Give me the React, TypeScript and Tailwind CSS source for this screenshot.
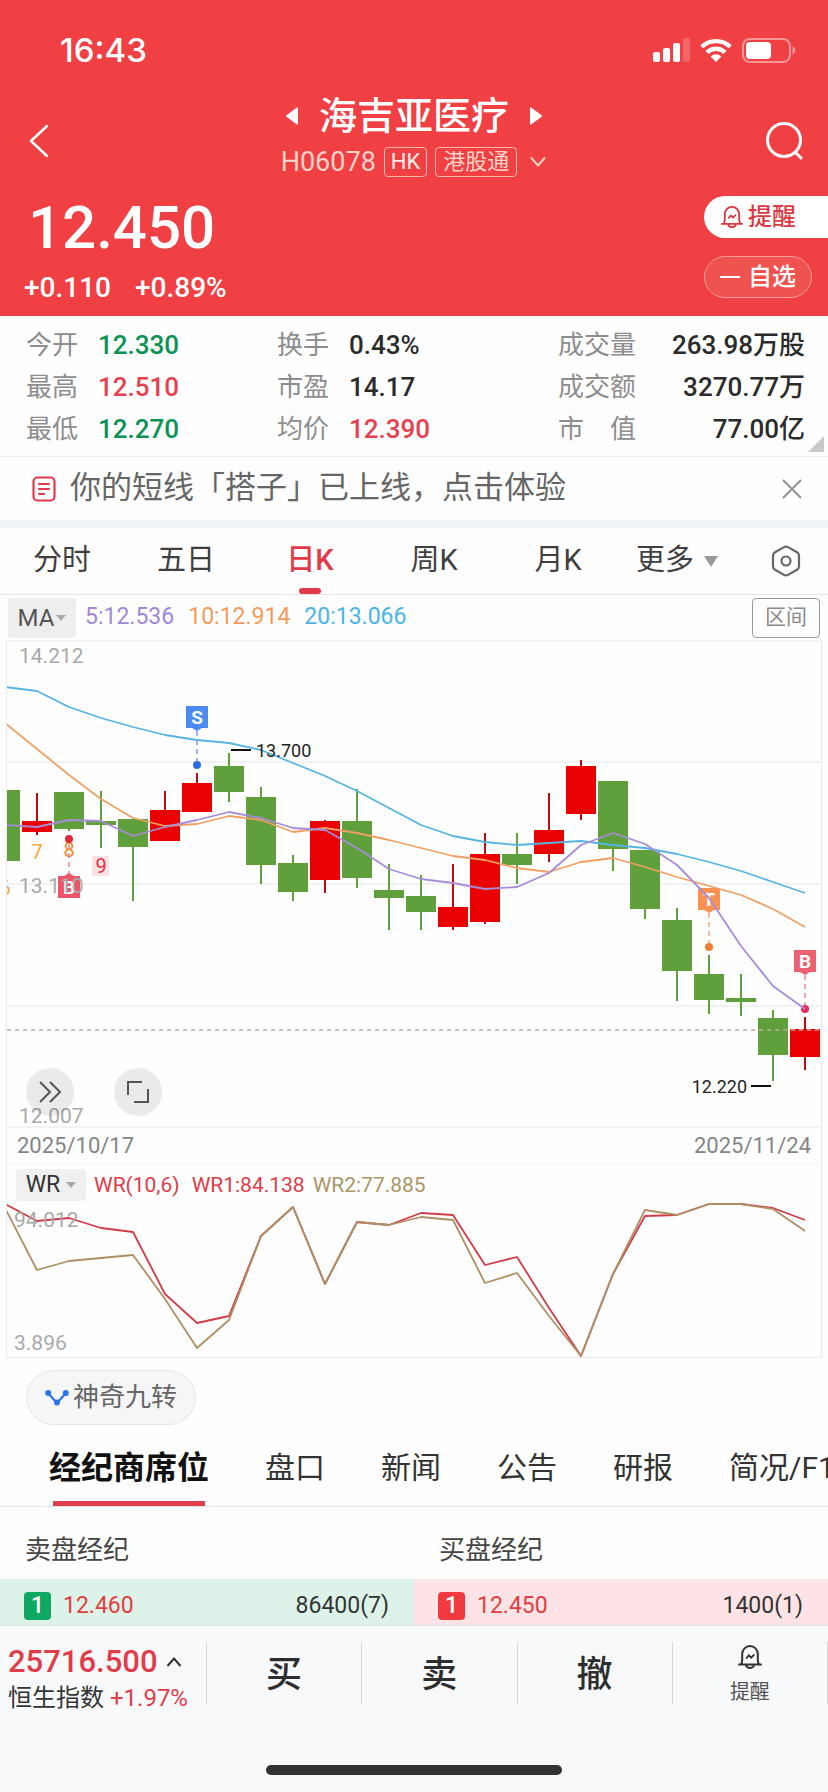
import type { ReactNode } from 'react';

type Candle = { high: number; top: number; bottom: number; low: number; up: boolean };

const STEP = 32;
const FIRST_X = 5;
const UP = '#ea0000';
const DOWN = '#5f9f3c';

const c = (high: number, top: number, bottom: number, low: number, up = false): Candle => ({ high, top, bottom, low, up });

const candles: Candle[] = [
  c(150, 150, 221, 221),
  c(153, 181, 192, 195, true),
  c(152, 152, 189, 191),
  c(151, 181, 185, 208),
  c(179, 179, 207, 261),
  c(151, 170, 201, 201, true),
  c(133, 143, 172, 172, true),
  c(113, 126, 152, 162),
  c(147, 157, 225, 244),
  c(215, 223, 252, 261),
  c(180, 181, 240, 253, true),
  c(149, 181, 238, 248),
  c(224, 250, 258, 290),
  c(235, 256, 272, 290),
  c(224, 267, 287, 290, true),
  c(193, 214, 282, 284, true),
  c(193, 214, 225, 244),
  c(153, 190, 214, 222, true),
  c(120, 126, 174, 180, true),
  c(141, 141, 209, 231),
  c(210, 210, 269, 279),
  c(268, 280, 331, 361),
  c(315, 334, 360, 374),
  c(334, 358, 362, 376),
  c(370, 378, 415, 441),
  c(377, 389, 417, 430, true),
];

const ma5 = [185, 187, 180, 181, 196, 187, 180, 172, 178, 188, 190, 208, 229, 239, 243, 249, 247, 233, 205, 193, 204, 225, 258, 306, 346, 369];
const ma10 = [83, 109, 135, 159, 178, 186, 184, 176, 180, 192, 188, 193, 200, 208, 216, 220, 228, 232, 222, 218, 227, 237, 246, 255, 269, 287];
const ma20 = [47, 51, 67, 78, 87, 95, 100, 103, 110, 123, 136, 151, 168, 185, 196, 202, 205, 203, 201, 205, 208, 214, 222, 231, 242, 253];
const wr1 = [3, 20, 17, 27, 31, 93, 122, 115, 35, 6, 83, 21, 24, 12, 14, 64, 56, 107, 155, 73, 15, 14, 3, 3, 7, 19];
const wr2 = [7, 69, 60, 57, 54, 98, 147, 119, 35, 6, 83, 21, 24, 16, 19, 82, 72, 115, 155, 73, 9, 14, 3, 3, 8, 30];

const xAt = (i: number) => FIRST_X + i * STEP;
const toPoints = (values: number[]) => values.map((y, i) => `${xAt(i)},${y}`).join(' ');

const stats = [
  [
    { label: '今开', value: '12.330', tone: 'text-[#0b9356]' },
    { label: '最高', value: '12.510', tone: 'text-[#e8404f]' },
    { label: '最低', value: '12.270', tone: 'text-[#0b9356]' },
  ],
  [
    { label: '换手', value: '0.43%', tone: 'text-[#2b2b2b]' },
    { label: '市盈', value: '14.17', tone: 'text-[#2b2b2b]' },
    { label: '均价', value: '12.390', tone: 'text-[#e8404f]' },
  ],
  [
    { label: '成交量', value: '263.98万股', tone: 'text-[#2b2b2b]' },
    { label: '成交额', value: '3270.77万', tone: 'text-[#2b2b2b]' },
    { label: '市　值', value: '77.00亿', tone: 'text-[#2b2b2b]' },
  ],
];

const periods = ['分时', '五日', '日K', '周K', '月K'];
const infoTabs = ['盘口', '新闻', '公告', '研报', '简况/F10'];

const BellIcon = ({ className }: { className: string }) => (
  <svg viewBox="0 0 26 26" className={className} fill="none" stroke="currentColor" strokeWidth="2" strokeLinecap="round" strokeLinejoin="round">
    <path d="M2 20.5h22M4 20c1.2-1.2 1.2-2.5 1.2-4.500V10a7.800 8 0 0 1 15.600 0v5.500c0 2 0 3.300 1.200 4.500M9 21.500c1.200 3.300 6.800 3.300 8 0" />
    <path d="M9.500 14l2.500-2.800 2 2.600 2.800-2.800" strokeWidth="1.8" />
  </svg>
);

const Header = () => (
  <header className="bg-[#f04043] pb-2 text-white">
    <div className="flex items-center justify-between pl-[60px] pr-8 pt-[30px]">
      <span className="font-[Inter] text-[33px] font-medium leading-10">16:43</span>
      <div className="flex items-center gap-2.5">
        <svg viewBox="0 0 37 24" className="h-6 w-[37px]" fill="#fff">
          <rect x="0" y="14" width="7" height="10" rx="2" />
          <rect x="10" y="10" width="7" height="14" rx="2" />
          <rect x="20" y="5" width="7" height="19" rx="2" />
          <rect x="30" y="0" width="7" height="24" rx="2" opacity="0.2" />
        </svg>
        <svg viewBox="0 0 32 24" className="h-6 w-8" fill="none" stroke="#fff" strokeWidth="4.4">
          <path d="M1.8 8.8a20.5 20.5 0 0 1 28.4 0" />
          <path d="M7 14.4a13 13 0 0 1 18 0" />
          <path d="M16 24l-5.4-5.6a8 8 0 0 1 10.8 0z" fill="#fff" stroke="none" />
        </svg>
        <svg viewBox="0 0 54 25" className="h-[25px] w-[54px]">
          <rect x="1" y="1" width="47" height="23" rx="7" fill="none" stroke="#fff" strokeOpacity="0.45" strokeWidth="2" />
          <rect x="4" y="4" width="25" height="17" rx="4" fill="#fff" />
          <path d="M50.5 8.5c3.500 1.500 3.500 6.500 0 8z" fill="#fff" fillOpacity="0.45" />
        </svg>
      </div>
    </div>

    <div className="flex items-center justify-between pl-7 pr-[22px] pt-6">
      <button type="button" aria-label="返回" className="w-9 pt-2.5">
        <svg viewBox="0 0 22 34" className="h-[34px] w-[22px]" fill="none" stroke="#fff" strokeWidth="2.5" strokeLinecap="round" strokeLinejoin="round">
          <path d="M19 2L3 17l16 15" />
        </svg>
      </button>
      <div className="flex flex-col items-center gap-2">
        <div className="flex items-center gap-5">
          <button type="button" aria-label="上一只">
            <svg viewBox="0 0 13 18" className="h-[18px] w-[13px]" fill="#fff">
              <path d="M12 1.5v15a1 1 0 0 1-1.5.8L.8 10a1.2 1.2 0 0 1 0-2L10.5.7A1 1 0 0 1 12 1.5z" />
            </svg>
          </button>
          <h1 className="text-[38px] font-medium leading-11">海吉亚医疗</h1>
          <button type="button" aria-label="下一只">
            <svg viewBox="0 0 13 18" className="h-[18px] w-[13px]" fill="#fff">
              <path d="M1 1.5v15a1 1 0 0 0 1.5.8l9.7-7.3a1.2 1.2 0 0 0 0-2L2.5.7A1 1 0 0 0 1 1.5z" />
            </svg>
          </button>
        </div>
        <div className="flex items-center gap-2">
          <span className="text-[27px] leading-8 text-[#fdd2c8]">H06078</span>
          <span className="rounded border border-[#fbb7b0] px-1.5 text-[22px] leading-7 text-[#fff0ec]">HK</span>
          <span className="rounded border border-[#fbb7b0] px-[7px] text-[22px] leading-7 text-[#fdd2c8]">港股通</span>
          <button type="button" aria-label="展开" className="pl-1">
            <svg viewBox="0 0 18 12" className="h-3 w-[18px]" fill="none" stroke="#fdd2c8" strokeWidth="2"><path d="M2 1.5l7 8 7-8" /></svg>
          </button>
        </div>
      </div>
      <button type="button" aria-label="搜索" className="pt-2.5">
        <svg viewBox="0 0 42 42" className="size-[42px]" fill="none" stroke="#fff" strokeWidth="3" strokeLinecap="round">
          <circle cx="20" cy="20" r="16.5" />
          <path d="M31 32l6 6" />
        </svg>
      </button>
    </div>

    <div className="flex justify-between pt-[18px]">
      <div className="pl-6">
        <div className="pl-1 text-[60px] font-medium leading-16">12.450</div>
        <div className="flex gap-6 pt-2 text-[28px] font-medium leading-10">
          <span>+0.110</span>
          <span>+0.89%</span>
        </div>
      </div>
      <div className="flex w-[124px] flex-col gap-[18px]">
        <button type="button" className="flex h-[42px] items-center gap-1 rounded-l-full bg-white pl-4 text-2xl font-medium text-[#dc3a42]">
          <BellIcon className="size-6" />
          提醒
        </button>
        <button type="button" className="mr-4 flex h-[42px] items-center justify-center gap-2 rounded-full border border-[#f69c9c] bg-[#ef5350] text-2xl font-medium text-white">
          <span className="h-0.5 w-5 bg-white" />
          自选
        </button>
      </div>
    </div>
  </header>
);

const Stats = () => (
  <section className="relative grid grid-cols-[251fr_281fr_247fr] border-b border-[#e8eaec] pb-1.5 pl-[26px] pr-[23px] pt-2">
    {stats.map((column, i) => (
      <dl key={i}>
        {column.map((row) => (
          <div key={row.label} className={i === 2 ? 'flex h-[42px] items-center justify-between' : 'flex h-[42px] items-center gap-5'}>
            <dt className="whitespace-nowrap text-[26px] text-[#8d8d8d]">{row.label}</dt>
            <dd className={`whitespace-nowrap text-[26px] font-medium ${row.tone}`}>{row.value}</dd>
          </div>
        ))}
      </dl>
    ))}
    <svg viewBox="0 0 16 16" className="absolute bottom-1 right-1 size-4" fill="#c9c9c9"><path d="M16 0v16H0z" /></svg>
  </section>
);

const Notice = () => (
  <section className="flex h-[63px] items-center pl-8 pr-[26px]">
    <svg viewBox="0 0 24 26" className="h-[26px] w-6" fill="none" stroke="#e23a4a" strokeWidth="2.2" strokeLinecap="round">
      <rect x="1.5" y="1.5" width="21" height="23" rx="4" />
      <path d="M7 8h10M7 13h10M7 18h5" />
    </svg>
    <a href="#notice" className="flex-1 whitespace-nowrap pl-3.5 text-[31px] text-[#666]">你的短线「搭子」已上线，点击体验</a>
    <button type="button" aria-label="关闭">
      <svg viewBox="0 0 20 20" className="size-5" stroke="#8f8f8f" strokeWidth="1.8"><path d="M1 1l18 18M19 1L1 19" /></svg>
    </button>
  </section>
);

const PeriodTabs = () => (
  <nav className="flex h-[67px] items-center border-b border-[#e2e4e6]">
    {periods.map((period) => (
      <button
        key={period}
        type="button"
        className={period === '日K' ? 'relative h-full flex-1 text-[29px] font-medium text-[#e23a4a]' : 'h-full flex-1 text-[29px] text-[#3f3f3f]'}
      >
        {period}
        {period === '日K' && <span className="absolute bottom-0 left-1/2 h-1.5 w-[22px] -translate-x-1/2 rounded-sm bg-[#e23a4a]" />}
      </button>
    ))}
    <button type="button" className="flex h-full w-[151px] items-center gap-2.5 pl-4 text-[29px] text-[#3f3f3f]">
      更多
      <svg viewBox="0 0 14 11" className="h-[11px] w-3.5" fill="#9a9a9a"><path d="M0 0h14L7 11z" /></svg>
    </button>
    <button type="button" aria-label="设置" className="w-[57px]">
      <svg viewBox="0 0 30 32" className="h-8 w-[30px]" fill="none" stroke="#666" strokeWidth="2.2" strokeLinejoin="round">
        <path d="M13 2.1a4 4 0 0 1 4 0l9 5.200a4 4 0 0 1 2 3.400v10.600a4 4 0 0 1-2 3.400l-9 5.200a4 4 0 0 1-4 0l-9-5.200a4 4 0 0 1-2-3.400V10.700a4 4 0 0 1 2-3.400z" />
        <circle cx="15" cy="16" r="4.5" />
      </svg>
    </button>
  </nav>
);

const Caret = () => (
  <svg viewBox="0 0 10 6" className="h-1.5 w-2.5" fill="#a8a8a8"><path d="M0 0h10L5 6z" /></svg>
);

const Flag = ({ x, y, color, letter, up = false }: { x: number; y: number; color: string; letter: string; up?: boolean }) => (
  <g>
    <rect x={x - 11} y={y} width="22" height="22" fill={color} />
    <path d={up ? `M${x - 5} ${y}l5-3 5 3z` : `M${x - 5} ${y + 22}l5 3 5-3z`} fill={color} />
    <text x={x} y={y + 18} fontSize="19" fontWeight="700" fill="#fff" textAnchor="middle">{letter}</text>
  </g>
);

const Line = ({ values, color }: { values: number[]; color: string }) => (
  <polyline points={toPoints(values)} fill="none" stroke={color} strokeWidth="1.8" strokeLinejoin="round" />
);

const CandleChart = () => (
  <div className="relative">
    <svg viewBox="7 0 814 488" className="block w-full" role="img" aria-label="日K线">
      {[1, 122, 244, 366, 487].map((y) => (
        <path key={y} d={`M7 ${y}h814`} stroke="#f0f2f3" strokeWidth="2" />
      ))}
      {candles.map((k, i) => (
        <g key={i} fill={k.up ? UP : DOWN}>
          <rect x={xAt(i) - 1} y={k.high} width="2" height={k.low - k.high} fill={k.up ? '#b90d12' : DOWN} />
          <rect x={xAt(i) - 15} y={k.top} width="30" height={k.bottom - k.top} />
        </g>
      ))}
      <g fontSize="20" textAnchor="middle">
        <text x="5" y="255" fill="#f2a93b">6</text>
        <text x="37" y="219" fill="#f2a93b">7</text>
        <text x="69" y="217" fill="#f08a2c">8</text>
        <rect x="92" y="216" width="17" height="20" fill="#fde0e1" />
        <text x="101" y="233" fill="#e0344a">9</text>
      </g>
      <g strokeWidth="1.5" strokeDasharray="5 4">
        <path d="M197 91v30" stroke="#7f9fe8" />
        <path d="M69 204v30" stroke="#d98a94" />
        <path d="M709 273v30" stroke="#f2a97e" />
        <path d="M805 335v30" stroke="#ea8d98" />
      </g>
      <Flag x={197} y={66} color="#4b8bf0" letter="S" />
      <Flag x={69} y={236} color="#f0546a" letter="B" up />
      <Flag x={709} y={248} color="#fb9252" letter="T" />
      <Flag x={805} y={310} color="#ec6172" letter="B" />
      <circle cx="197" cy="125" r="4" fill="#2a6be0" />
      <circle cx="69" cy="199" r="4" fill="#e0283c" />
      <circle cx="709" cy="307" r="4" fill="#f08030" />
      <circle cx="805" cy="369" r="4" fill="#e82c5c" />
      <g fontSize="21" fill="#a9a9a9">
        <text x="19" y="23">14.212</text>
        <text x="19" y="253">13.110</text>
        <text x="19" y="483">12.007</text>
      </g>
      <Line values={ma20} color="#55b4e0" />
      <Line values={ma10} color="#f0a062" />
      <Line values={ma5} color="#a78cd8" />
      <path d="M7 390h814" stroke="#c3a999" strokeWidth="1.5" strokeDasharray="4 4" />
      <path d="M231 110h20M751 446h20" stroke="#111" strokeWidth="2" />
      <g fontSize="18" fill="#222">
        <text x="256" y="117">13.700</text>
        <text x="747" y="453" textAnchor="end">12.220</text>
      </g>
    </svg>
    <div className="absolute bottom-3 left-[19px] flex gap-10">
      <button type="button" aria-label="快进" className="flex size-12 items-center justify-center rounded-full bg-black/8">
        <svg viewBox="0 0 24 22" className="h-[22px] w-6" fill="none" stroke="#555" strokeWidth="2"><path d="M2 1l10 10L2 21M12 1l10 10-10 10" /></svg>
      </button>
      <button type="button" aria-label="全屏" className="flex size-12 items-center justify-center rounded-full bg-black/8">
        <svg viewBox="0 0 24 24" className="size-6" fill="none" stroke="#555" strokeWidth="2"><path d="M2 15V2h14M22 9v13H8" /></svg>
      </button>
    </div>
  </div>
);

const Indicators = () => (
  <section>
    <div className="flex h-[45px] items-center px-2 text-[23px]">
      <button type="button" className="flex h-10 w-[68px] items-center justify-center gap-0.5 rounded bg-[#eeeeee] text-2xl text-[#555]">
        MA
        <Caret />
      </button>
      <div className="flex flex-1 gap-3.5 pl-[9px]">
        <span className="text-[#a088d8]">5:12.536</span>
        <span className="text-[#f59a5c]">10:12.914</span>
        <span className="text-[#4bb4e6]">20:13.066</span>
      </div>
      <button type="button" className="h-10 w-[68px] rounded border border-[#9a9a9a] text-[21px] text-[#8a8a8a]">区间</button>
    </div>
    <div className="mx-1.5 border-x border-b border-[#e6eaea]">
      <CandleChart />
      <div className="flex h-9 items-center justify-between border-b border-[#f1f3f3] px-2.5 text-[22px] text-[#858585]">
        <time dateTime="2025-10-17">2025/10/17</time>
        <time dateTime="2025-11-24">2025/11/24</time>
      </div>
      <div className="flex h-[37px] items-end pl-[9px] text-[21px]">
        <button type="button" className="flex h-8 w-[70px] items-center justify-center gap-1.5 rounded bg-[#f0f0f0] text-[23px] text-[#333]">
          WR
          <Caret />
        </button>
        <span className="pl-2 leading-8 text-[#dd3c48]">WR(10,6)</span>
        <span className="pl-3 leading-8 text-[#dd3c48]">WR1:84.138</span>
        <span className="pl-2 leading-8 text-[#ad9567]">WR2:77.885</span>
      </div>
      <svg viewBox="7 0 814 156" className="block w-full" role="img" aria-label="WR指标">
        <Line values={wr1} color="#d23b48" />
        <Line values={wr2} color="#ad8f63" />
        <g fontSize="21" fill="#a9a9a9">
          <text x="14" y="26">94.012</text>
          <text x="14" y="149">3.896</text>
        </g>
      </svg>
    </div>
    <button type="button" className="ml-[26px] mt-3 flex h-[55px] w-[170px] items-center justify-center gap-1 rounded-full border border-[#e6e6e8] bg-[#f6f6f7] text-[26px] text-[#666]">
      <svg viewBox="0 0 24 18" className="h-[18px] w-6" fill="#2b74ea">
        <path d="M3 4l9 10 9-10" fill="none" stroke="#2b74ea" strokeWidth="2.2" />
        <circle cx="3.2" cy="4" r="3" />
        <circle cx="12" cy="13.5" r="3" />
        <circle cx="20.8" cy="4" r="3" />
      </svg>
      神奇九转
    </button>
  </section>
);

const InfoTabs = () => (
  <nav className="mt-1 flex h-[78px] gap-14 overflow-hidden whitespace-nowrap border-b border-[#e4e4e6] pl-[49px] text-[30px] text-[#333]">
    <button type="button" className="relative h-full shrink-0 text-[32px] font-bold text-[#111]">
      经纪商席位
      <span className="absolute inset-x-1 bottom-0 h-[5px] bg-[#dd3f4c]" />
    </button>
    {infoTabs.map((tab) => (
      <button key={tab} type="button" className="h-full shrink-0">{tab}</button>
    ))}
  </nav>
);

type SideProps = { title: string; price: string; volume: string; row: string; badge: string };

const BrokerSide = ({ title, price, volume, row, badge }: SideProps) => (
  <div className="flex-1">
    <h2 className="flex h-[72px] items-center pl-[25px] pt-3.5 text-[26px] text-[#444]">{title}</h2>
    <div className={`flex h-[46px] items-center pl-6 pr-[25px] pt-2 text-[23px] ${row}`}>
      <span className={`flex h-7 w-[27px] items-center justify-center rounded-sm text-[23px] font-medium text-white ${badge}`}>1</span>
      <span className="flex-1 pl-3 text-[#e23f42]">{price}</span>
      <span className="text-[#333]">{volume}</span>
    </div>
  </div>
);

const Cell = ({ children }: { children: ReactNode }) => (
  <div className="flex h-[62px] flex-1 items-center justify-center border-r border-[#d4d6da] pt-1">{children}</div>
);

const TradeBar = () => (
  <footer className="flex-1 border-t border-[#dfe3e6] bg-[#f8f9fb] py-4">
    <div className="flex">
      <div className="w-[207px] border-r border-[#d4d6da] pl-2">
        <button type="button" className="flex items-center gap-2 text-[31px] font-medium leading-10 text-[#e03c4a]">
          25716.500
          <svg viewBox="0 0 16 10" className="h-2.5 w-4" fill="none" stroke="#333" strokeWidth="2"><path d="M1.5 9L8 1.5 14.5 9" /></svg>
        </button>
        <p className="h-[22px] whitespace-nowrap text-2xl leading-8 text-[#333]">
          恒生指数 <span className="text-[#e03c4a]">+1.97%</span>
        </p>
      </div>
      {['买', '卖', '撤'].map((action) => (
        <Cell key={action}>
          <button type="button" className="text-4xl font-medium text-[#2e2e2e]">{action}</button>
        </Cell>
      ))}
      <Cell>
        <button type="button" className="flex flex-col items-center gap-2 text-xl leading-7 text-[#555]">
          <BellIcon className="size-[26px] text-[#333]" />
          提醒
        </button>
      </Cell>
    </div>
    <div className="mx-auto mt-[61px] h-2.5 w-[296px] rounded-full bg-[#323335]" />
  </footer>
);

const App = () => (
  <div className="flex min-h-screen flex-col overflow-hidden bg-[#fefefe] font-[Roboto,'Noto_Sans_CJK_SC',sans-serif]">
    <Header />
    <Stats />
    <Notice />
    <div className="h-2 bg-[#f1f4f7]" />
    <PeriodTabs />
    <Indicators />
    <InfoTabs />
    <section className="flex">
      <BrokerSide title="卖盘经纪" price="12.460" volume="86400(7)" row="bg-[#ddf3e9]" badge="bg-[#0fa862]" />
      <BrokerSide title="买盘经纪" price="12.450" volume="1400(1)" row="bg-[#fde3e6]" badge="bg-[#f03a40]" />
    </section>
    <TradeBar />
  </div>
);

export default App;
